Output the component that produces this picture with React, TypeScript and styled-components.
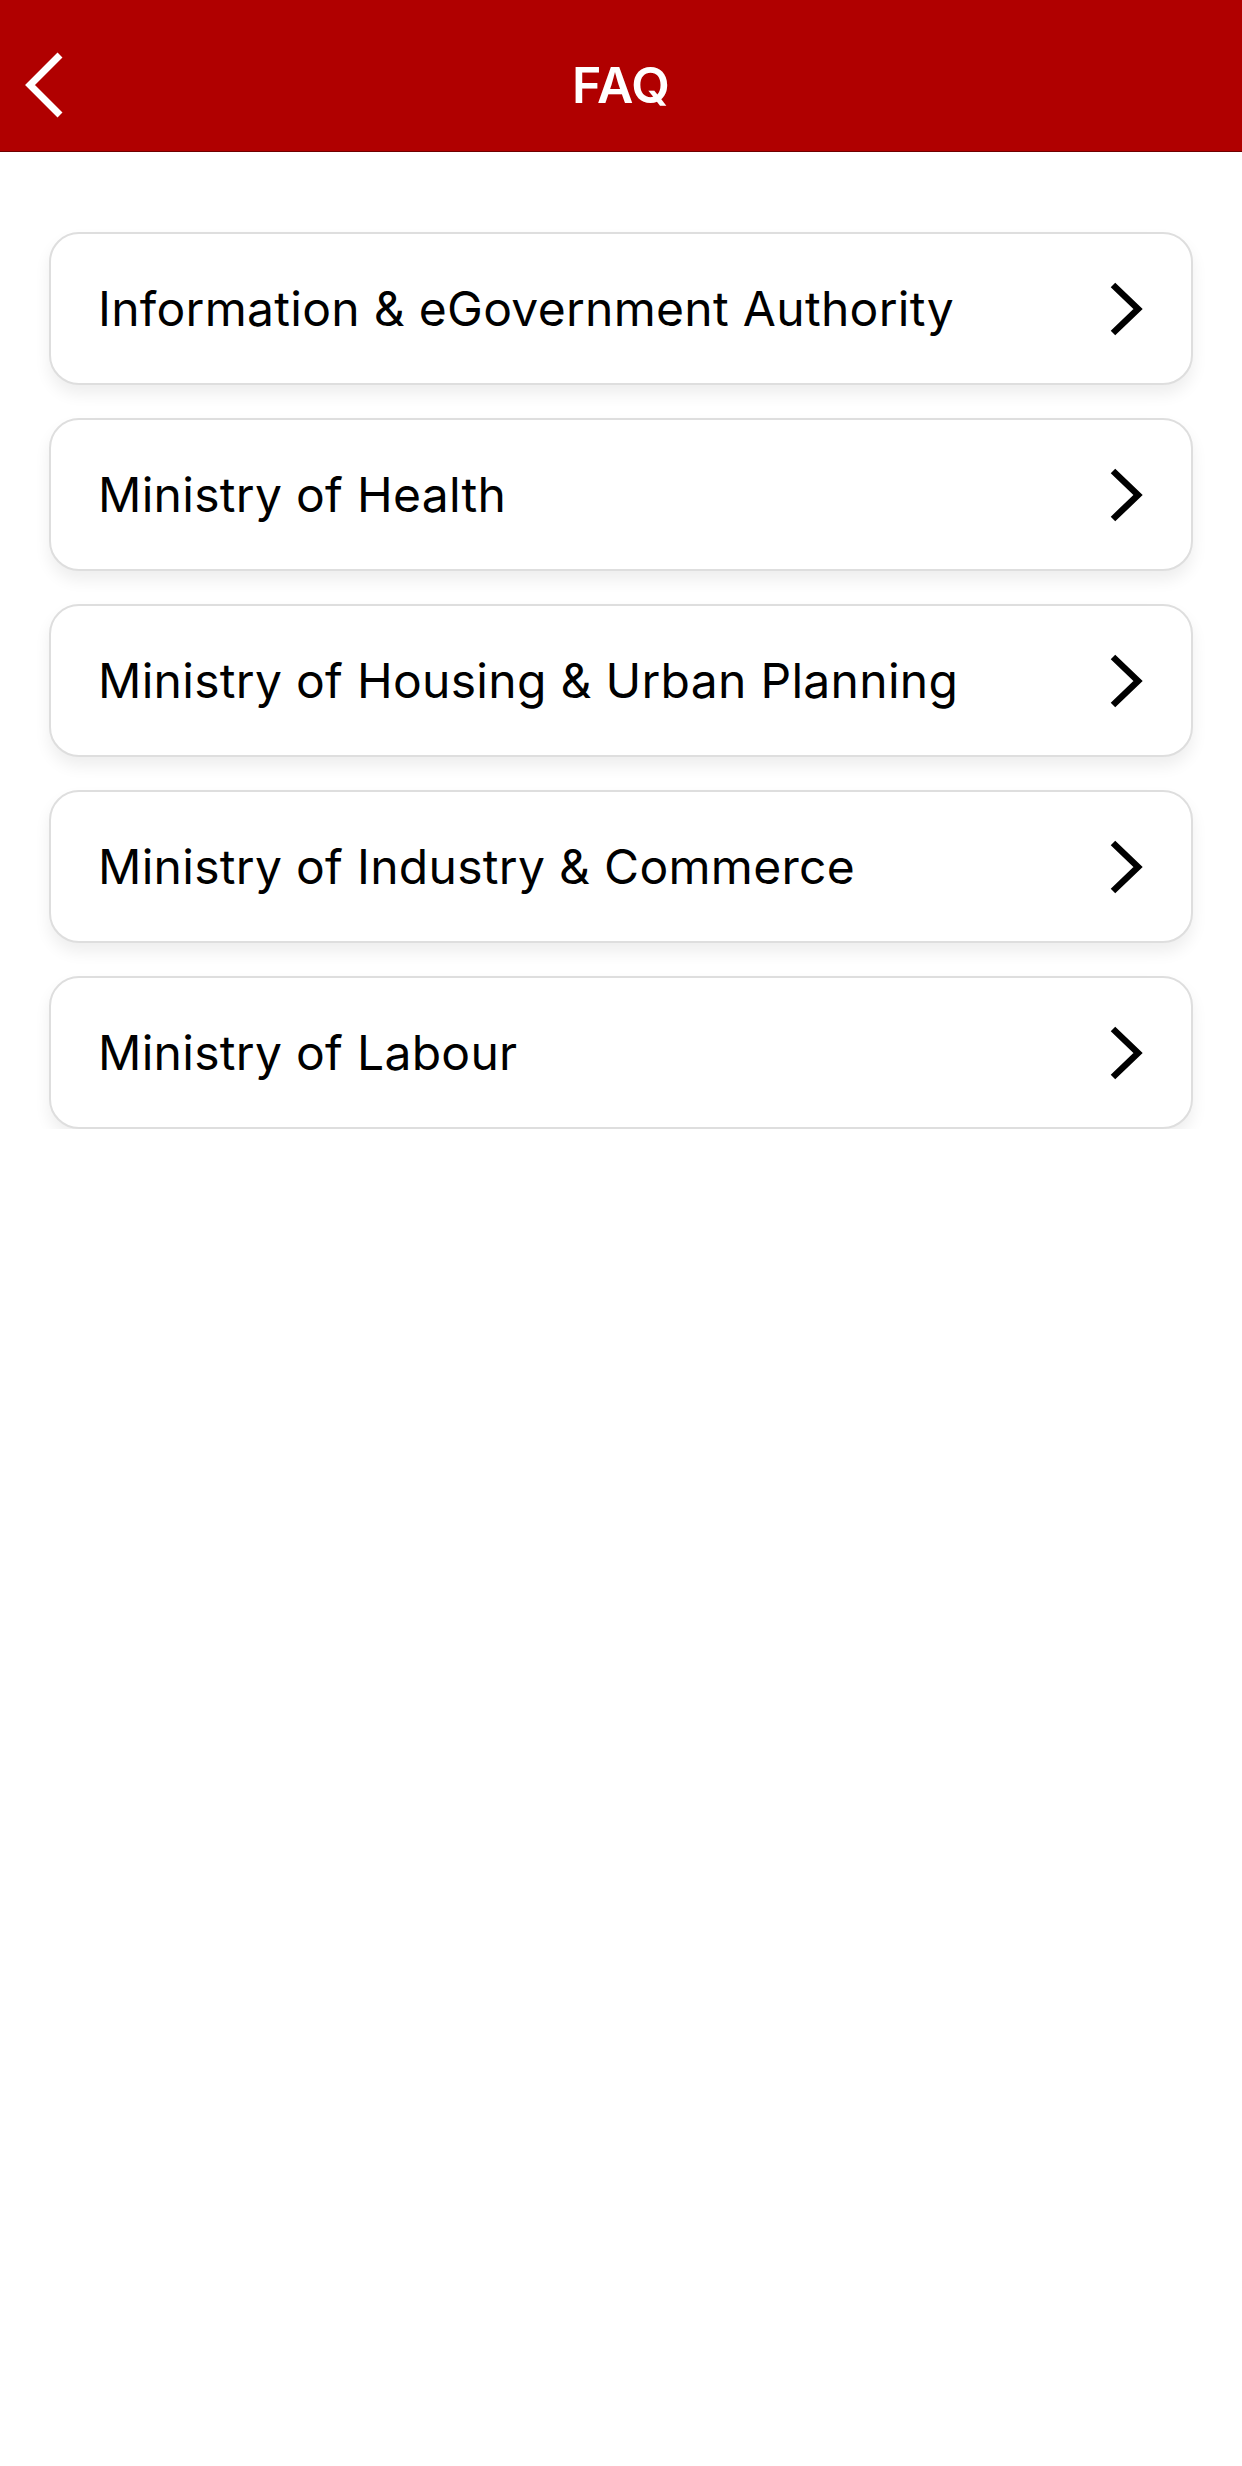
import styled, { createGlobalStyle } from 'styled-components';

const GlobalStyle = createGlobalStyle`
  html, body {
    margin: 0;
    padding: 0;
    background: #ffffff;
  }
  body {
    font-family: Inter, Roboto, "Noto Sans", sans-serif;
    -webkit-font-smoothing: antialiased;
  }
`;

// Header
const Header = styled.header`
  height: 152px;
  box-sizing: border-box;
  background-color: #b00000;
  border-bottom: 1px solid #6e0000;
  display: grid;
  grid-template-columns: 120px 1fr 120px;
  align-items: center;
  padding-top: 18px;
`;

const BackButton = styled.button`
  background: none;
  border: none;
  padding: 0 0 0 22px;
  display: flex;
  align-items: center;
  cursor: pointer;
`;

const Title = styled.h1`
  margin: 0;
  color: #ffffff;
  font-size: 50px;
  font-weight: 600;
  text-align: center;
  letter-spacing: 0;
`;

// List
const List = styled.ul`
  list-style: none;
  margin: 0;
  padding: 80px 49px 0;
  display: flex;
  flex-direction: column;
  gap: 33px;
`;

const Card = styled.li`
  height: 153px;
  box-sizing: border-box;
  border: 2px solid #dedede;
  border-radius: 30px;
  background: #ffffff;
  box-shadow: 0 9px 16px rgba(0, 0, 0, 0.07);
  display: flex;
  align-items: center;
  justify-content: space-between;
  padding: 0 48px 0 47px;
`;

const CardLabel = styled.span`
  color: #000000;
  font-size: 48px;
  font-weight: 400;
  letter-spacing: 0.3px;
`;

const Chevron = ({ dir }: { dir: 'left' | 'right' }) =>
  dir === 'right' ? (
    <svg width="34" height="54" viewBox="0 0 34 54" fill="none">
      <polyline points="4,3 29,27 4,51" stroke="#000" strokeWidth="6.5" />
    </svg>
  ) : (
    <svg width="42" height="66" viewBox="0 0 42 66" fill="none">
      <polyline points="38,3 8,33 38,63" stroke="#fff" strokeWidth="7" />
    </svg>
  );

const items = [
  'Information & eGovernment Authority',
  'Ministry of Health',
  'Ministry of Housing & Urban Planning',
  'Ministry of Industry & Commerce',
  'Ministry of Labour',
];

const App = () => {
  return (
    <>
      <GlobalStyle />
      <Header>
        <BackButton aria-label="Back">
          <Chevron dir="left" />
        </BackButton>
        <Title>FAQ</Title>
        <span />
      </Header>
      <List>
        {items.map((item) => (
          <Card key={item}>
            <CardLabel>{item}</CardLabel>
            <Chevron dir="right" />
          </Card>
        ))}
      </List>
    </>
  );
};

export default App;
